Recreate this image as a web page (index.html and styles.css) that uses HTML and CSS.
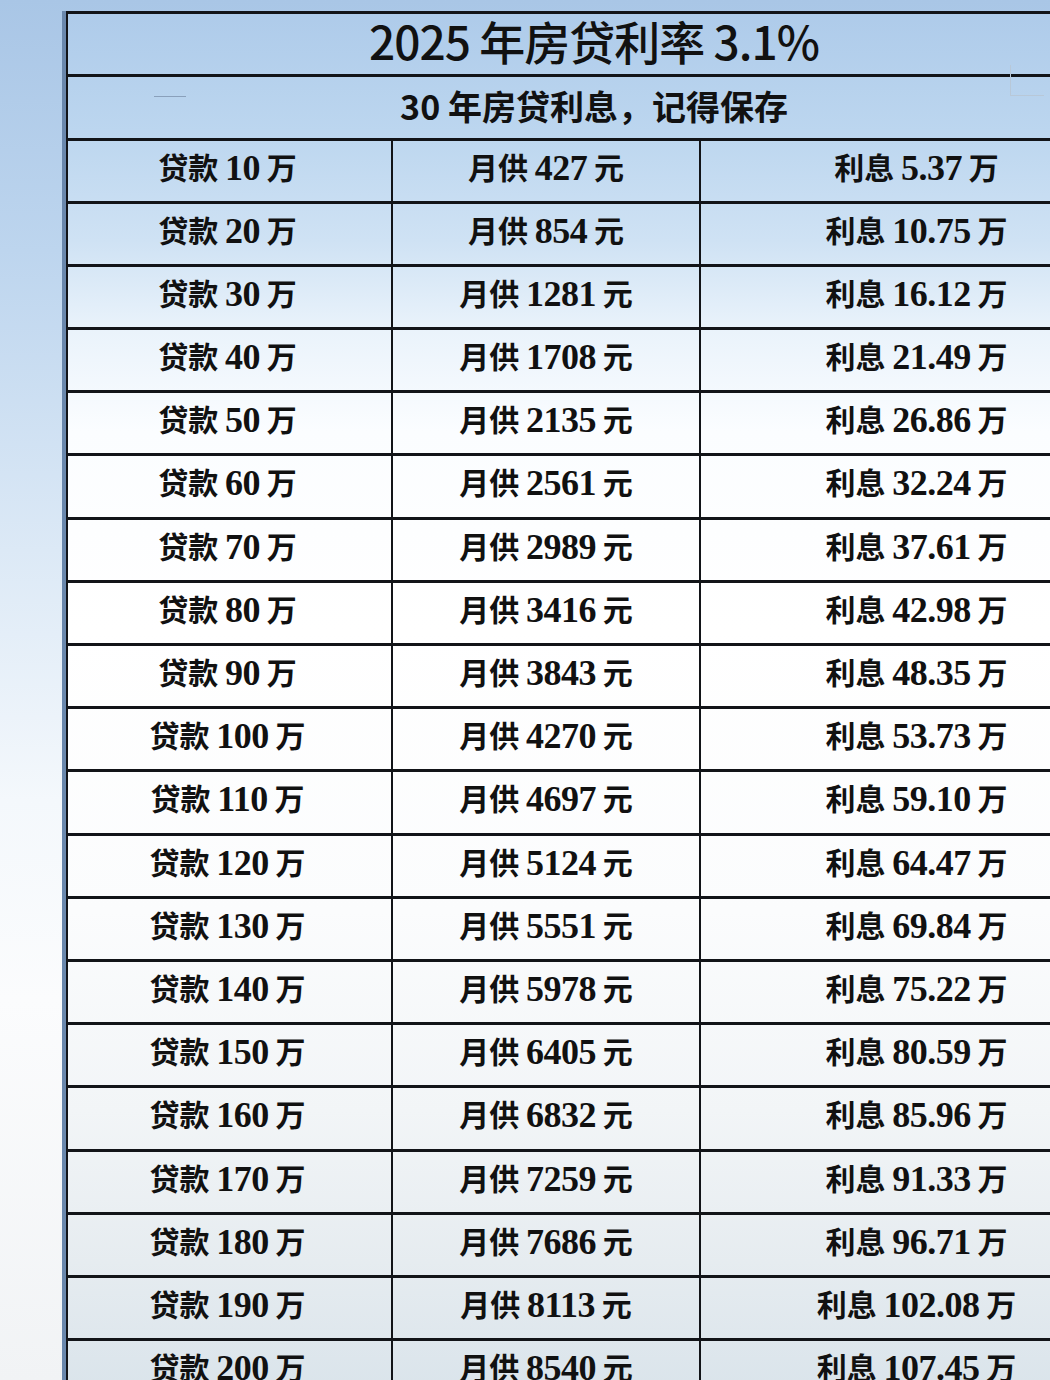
FILE: index.html
```html
<!DOCTYPE html>
<html lang="zh-CN">
<head>
<meta charset="utf-8">
<title>2025年房贷利率3.1%</title>
<link rel="stylesheet" href="styles.css">
</head>
<body>
<div class="page">
  <div class="side"></div>
  <div class="sheet">
    <div class="title row">2025 年房贷利率 3.1%</div>
    <div class="subtitle row">30 年房贷利息，记得保存<span class="mark-l"></span><span class="mark-r"></span></div>
    <div class="grid">
      <div class="c1">贷款 <span class="n">10</span> 万</div><div class="c2">月供 <span class="n">427</span> 元</div><div class="c3">利息 <span class="n">5.37</span> 万</div>
      <div class="c1">贷款 <span class="n">20</span> 万</div><div class="c2">月供 <span class="n">854</span> 元</div><div class="c3">利息 <span class="n">10.75</span> 万</div>
      <div class="c1">贷款 <span class="n">30</span> 万</div><div class="c2">月供 <span class="n">1281</span> 元</div><div class="c3">利息 <span class="n">16.12</span> 万</div>
      <div class="c1">贷款 <span class="n">40</span> 万</div><div class="c2">月供 <span class="n">1708</span> 元</div><div class="c3">利息 <span class="n">21.49</span> 万</div>
      <div class="c1">贷款 <span class="n">50</span> 万</div><div class="c2">月供 <span class="n">2135</span> 元</div><div class="c3">利息 <span class="n">26.86</span> 万</div>
      <div class="c1">贷款 <span class="n">60</span> 万</div><div class="c2">月供 <span class="n">2561</span> 元</div><div class="c3">利息 <span class="n">32.24</span> 万</div>
      <div class="c1">贷款 <span class="n">70</span> 万</div><div class="c2">月供 <span class="n">2989</span> 元</div><div class="c3">利息 <span class="n">37.61</span> 万</div>
      <div class="c1">贷款 <span class="n">80</span> 万</div><div class="c2">月供 <span class="n">3416</span> 元</div><div class="c3">利息 <span class="n">42.98</span> 万</div>
      <div class="c1">贷款 <span class="n">90</span> 万</div><div class="c2">月供 <span class="n">3843</span> 元</div><div class="c3">利息 <span class="n">48.35</span> 万</div>
      <div class="c1">贷款 <span class="n">100</span> 万</div><div class="c2">月供 <span class="n">4270</span> 元</div><div class="c3">利息 <span class="n">53.73</span> 万</div>
      <div class="c1">贷款 <span class="n">110</span> 万</div><div class="c2">月供 <span class="n">4697</span> 元</div><div class="c3">利息 <span class="n">59.10</span> 万</div>
      <div class="c1">贷款 <span class="n">120</span> 万</div><div class="c2">月供 <span class="n">5124</span> 元</div><div class="c3">利息 <span class="n">64.47</span> 万</div>
      <div class="c1">贷款 <span class="n">130</span> 万</div><div class="c2">月供 <span class="n">5551</span> 元</div><div class="c3">利息 <span class="n">69.84</span> 万</div>
      <div class="c1">贷款 <span class="n">140</span> 万</div><div class="c2">月供 <span class="n">5978</span> 元</div><div class="c3">利息 <span class="n">75.22</span> 万</div>
      <div class="c1">贷款 <span class="n">150</span> 万</div><div class="c2">月供 <span class="n">6405</span> 元</div><div class="c3">利息 <span class="n">80.59</span> 万</div>
      <div class="c1">贷款 <span class="n">160</span> 万</div><div class="c2">月供 <span class="n">6832</span> 元</div><div class="c3">利息 <span class="n">85.96</span> 万</div>
      <div class="c1">贷款 <span class="n">170</span> 万</div><div class="c2">月供 <span class="n">7259</span> 元</div><div class="c3">利息 <span class="n">91.33</span> 万</div>
      <div class="c1">贷款 <span class="n">180</span> 万</div><div class="c2">月供 <span class="n">7686</span> 元</div><div class="c3">利息 <span class="n">96.71</span> 万</div>
      <div class="c1">贷款 <span class="n">190</span> 万</div><div class="c2">月供 <span class="n">8113</span> 元</div><div class="c3">利息 <span class="n">102.08</span> 万</div>
      <div class="c1">贷款 <span class="n">200</span> 万</div><div class="c2">月供 <span class="n">8540</span> 元</div><div class="c3">利息 <span class="n">107.45</span> 万</div>
    </div>
  </div>
</div>
</body>
</html>
```
FILE: styles.css
```css
* { box-sizing: border-box; }
html, body {
  margin: 0;
  padding: 0;
  width: 1050px;
  height: 1380px;
  overflow: hidden;
}
body {
  background: linear-gradient(to bottom, #a9c6e6 0px, #bdd5ee 250px, #dce9f6 550px, #f4f8fc 800px, #fbfcfd 1000px, #f1f3f5 1380px);
  font-family: "Liberation Serif", "Noto Sans CJK SC", sans-serif;
  color: #111;
}
.page {
  display: flex;
  padding-top: 11px;
  height: 1380px;
}
.side {
  width: 62px;
  flex: none;
}
.sheet {
  position: relative;
  width: 1060px;
  flex: none;
  border-left: 4px solid #6a88ad;
  background: linear-gradient(to bottom, #aecbea 0px, #bcd6ef 120px, #cfe2f4 230px, #eaf3fb 320px, #fbfdff 420px, #ffffff 620px, #fbfcfd 900px, #f2f5f7 1100px, #e6ecf0 1250px, #dae4eb 1380px);
}
.row {
  height: 63px;
  border-top: 3px solid #121418;
  border-left: 2px solid #121418;
  display: flex;
  align-items: center;
  justify-content: center;
  padding-right: 2px;
}
.title {
  font-family: "Noto Sans CJK SC", sans-serif;
  font-weight: 500;
  font-size: 46px;
  letter-spacing: -1px;
  padding-bottom: 8px;
}
.subtitle {
  position: relative;
  font-family: "Noto Sans CJK SC", sans-serif;
  font-weight: 700;
  font-size: 34px;
  height: 63.5px;
  padding-bottom: 4px;
}
.mark-l {
  position: absolute;
  left: 86px;
  top: 19px;
  width: 32px;
  height: 1px;
  background: #8aa0bb;
}
.mark-r {
  position: absolute;
  left: 942px;
  top: -12px;
  width: 34px;
  height: 31px;
  border-left: 1px solid #b8c8d8;
  border-bottom: 1px solid #b8c8d8;
}
.grid {
  display: grid;
  grid-template-columns: 323px 308px 429px;
  grid-auto-rows: 63.2px;
  border-left: 2px solid #121418;
}
.grid > div {
  border-top: 3px solid #121418;
  text-align: center;
  font-family: "Noto Sans CJK SC", sans-serif;
  font-weight: 700;
  font-size: 30px;
  line-height: 51px;
  white-space: nowrap;
}
.n {
  font-family: "Liberation Serif", serif;
  font-weight: 700;
  font-size: 36px;
  letter-spacing: -0.5px;
  position: relative;
  top: 1px;
}
.c1 { padding-right: 4px; }
.c2 { border-left: 2px solid #121418; }
.c3 { border-left: 2px solid #121418; padding-left: 4px; }
```
